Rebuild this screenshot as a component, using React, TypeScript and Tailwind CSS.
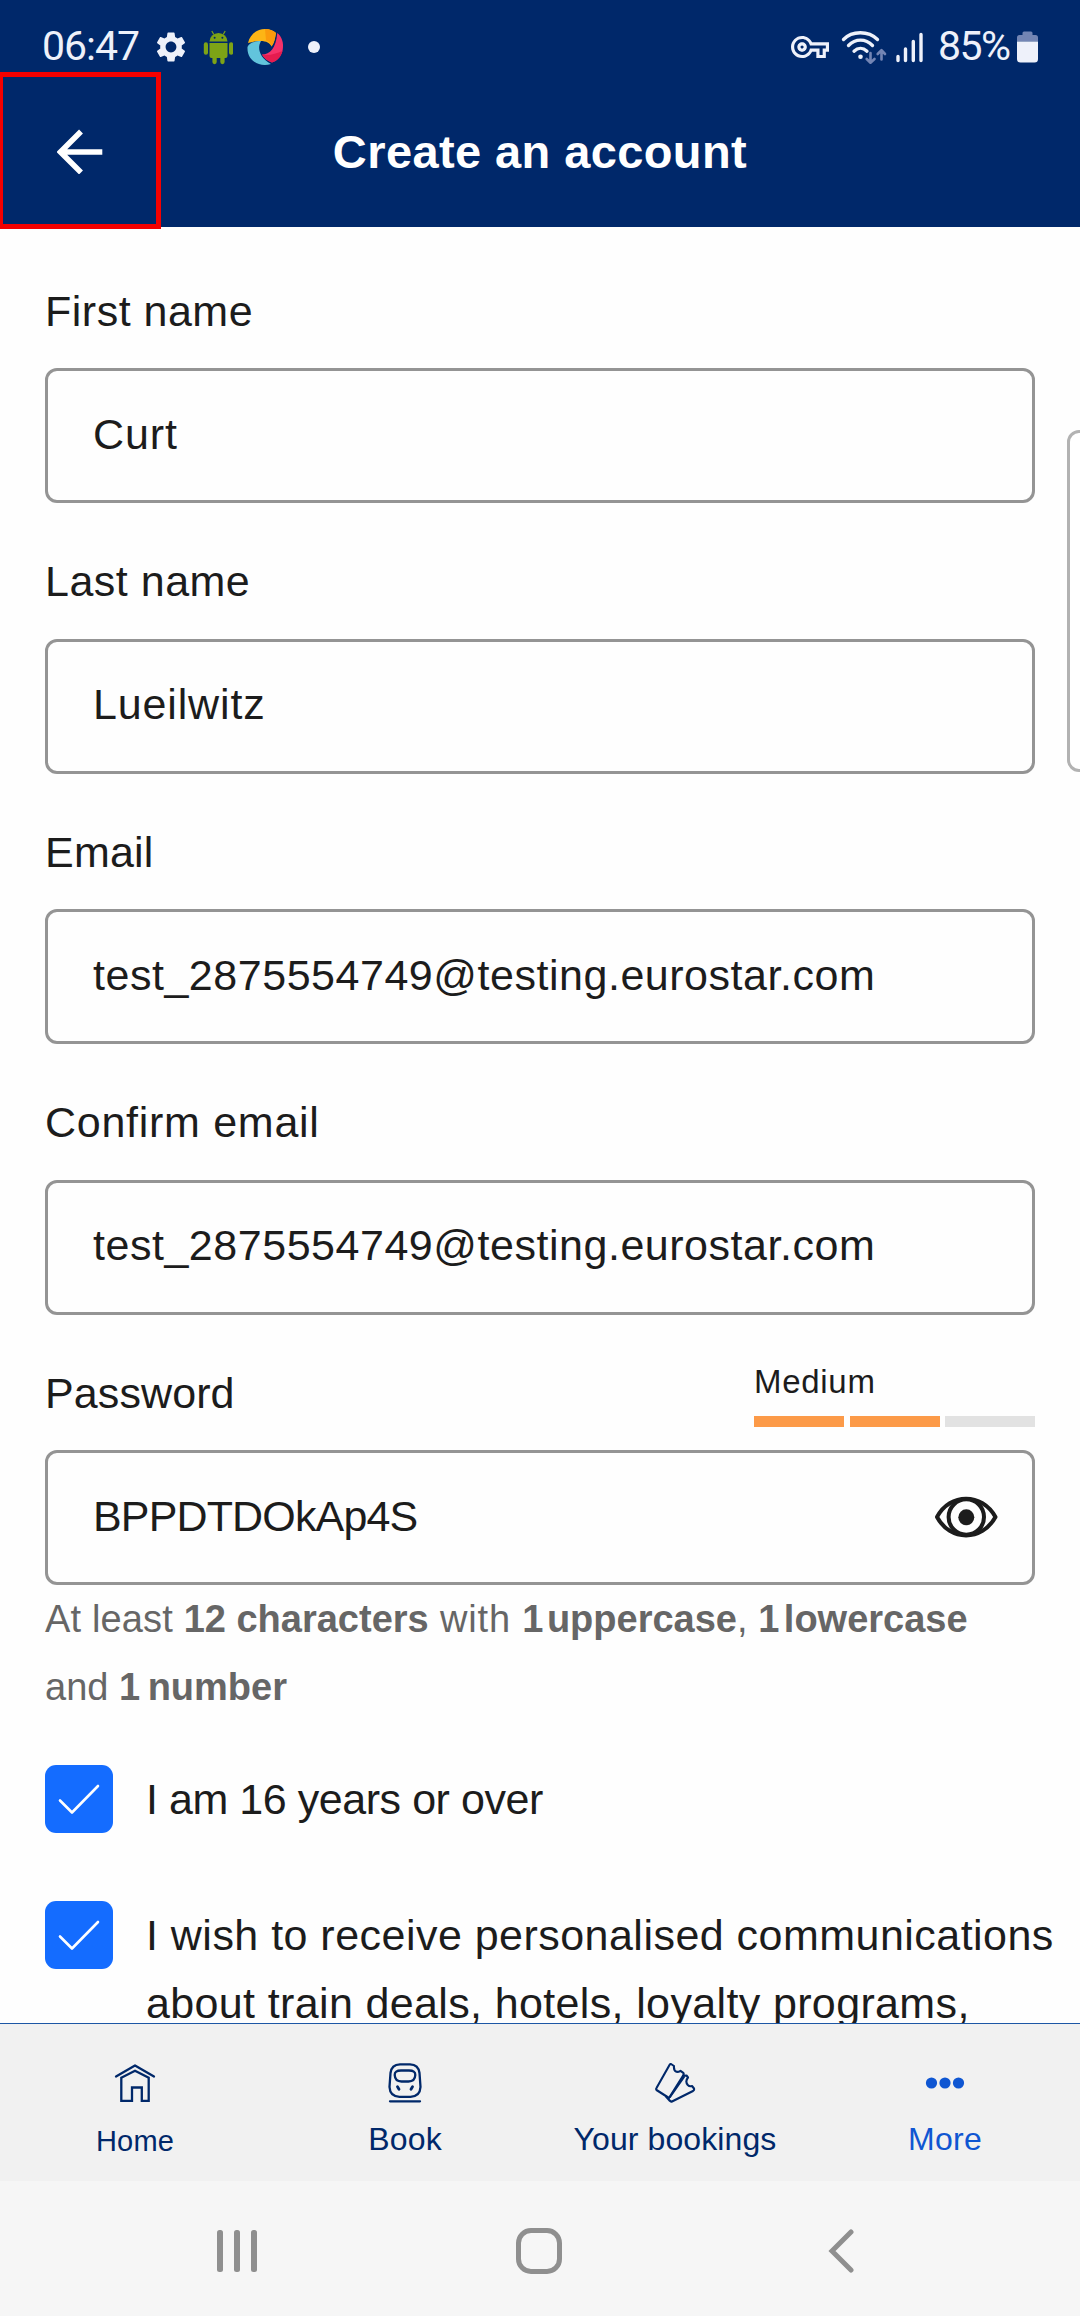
import React from "react";
import { MdSettings, MdOutlineVpnKey } from "react-icons/md";

function AndroidIcon() {
  return (
    <svg className="ml-[14px] h-[36px] w-[30px]" viewBox="203 28 30 36" fill="#7da316">
      <path d="M213.8 33.5 L211.8 30 M223.2 33.5 L225.2 30" stroke="#7da316" strokeWidth="1.2" />
      <path d="M209.5 40.6 A9 8.6 0 0 1 227.5 40.6 Z" />
      <circle cx="214.6" cy="36.8" r="1" fill="#00286a" />
      <circle cx="222.4" cy="36.8" r="1" fill="#00286a" />
      <path d="M209.5 42 H227.5 V55 A2 2 0 0 1 225.5 57 H224.6 V61 A2 2 0 0 1 220.3 61 V57 H216.7 V61 A2 2 0 0 1 212.4 61 V57 H211.5 A2 2 0 0 1 209.5 55 Z" />
      <rect x="203.800" y="41.300" width="4.200" height="12.500" rx="2.100" />
      <rect x="229" y="41.300" width="4.200" height="12.500" rx="2.100" />
    </svg>
  );
}

function SwirlIcon() {
  return (
    <svg className="ml-[14px] h-[38px] w-[38px]" viewBox="247 27 38 38">
      <path d="M248 42 C250 33 257 28 265 28 C270 28 274 30 276 32 C275 37 274.500 42 271.500 45.500 C269 40 262 38 248 42 Z" fill="#fdb515" />
      <path d="M266 39.500 C270 40.500 271 43 271.500 45.500 C274.500 42 275 37 276 32 C273 29.500 269 28 265 28 Z" fill="#fb9a0c" />
      <path d="M277.300 32 C282 36 284 42 282.700 49 C281 56 277 60 272 61.500 C267 60 264 57 262 53.500 C270 53.500 276 47 277.300 32 Z" fill="#f5326a" />
      <path d="M262 53.500 C268 55 276 53 282.500 50 C281 56 277 60 272 61.500 C267 60 264 57 262 53.500 Z" fill="#e51c4f" />
      <path d="M247.500 46 C248 44.500 250 42.500 252 41.500 C256 40 259 40 261 40.200 C257 46 259 57 271 63 C262 66 254 62 250 56.500 C248 53 247.300 50 247.500 46 Z" fill="#62c4dc" />
    </svg>
  );
}

function WifiIcon() {
  return (
    <svg className="ml-[12px] h-[38px] w-[46px]" viewBox="841 27 46 38" fill="none" strokeLinecap="round">
      <g stroke="#eef1fa" strokeWidth="3.300">
        <path d="M843.500 38.500 C852 29.500 868.500 29.500 877.500 38.500" />
        <path d="M848.500 44.500 C855.500 37.300 865.500 37.300 872.500 44.500" />
        <path d="M854 50.200 C858 46.400 863 46.400 867 50.200" />
      </g>
      <circle cx="860.500" cy="55.700" r="2.300" fill="#eef1fa" />
      <g stroke="#7385b4" strokeWidth="2.600" strokeLinejoin="round">
        <path d="M870.500 52 V61.500 M866.700 58 L870.500 61.700 L874.500 58" />
        <path d="M881.500 58.500 V49.500 M877.700 53 L881.500 49.200 L885 53" />
      </g>
    </svg>
  );
}

function SignalIcon() {
  return (
    <svg className="ml-[8px] h-[32px] w-[28px]" viewBox="895 30 28 32" stroke="#eef1fa" strokeWidth="3.400" strokeLinecap="round">
      <path d="M898 55.500 V59.500 M905.500 48 V59.500 M913.300 40.500 V59.500 M921 33.500 V59.500" />
    </svg>
  );
}

function BatteryIcon() {
  return (
    <svg className="ml-[6px] h-[32px] w-[21px]" viewBox="1017 30.500 21 32">
      <path d="M1017 41 V37 Q1017 34.500 1019.500 34.500 H1022.500 V32.500 Q1022.500 31 1024 31 H1031 Q1032.500 31 1032.500 32.500 V34.500 H1035.500 Q1038 34.500 1038 37 V41 Z" fill="#7385b4" />
      <path d="M1017 41 H1038 V58.500 Q1038 62 1034.500 62 H1020.500 Q1017 62 1017 58.500 Z" fill="#eef1fa" />
    </svg>
  );
}

function StatusBar() {
  return (
    <div className="flex h-[93px] items-center pr-[42px] pl-[42px] font-[Roboto,sans-serif] text-[41px] text-[#eef1fa]">
      <span className="w-[111px] whitespace-nowrap tracking-[-1px]">06:47</span>
      <MdSettings className="size-[36px]" />
      <AndroidIcon />
      <SwirlIcon />
      <span className="ml-[23px] size-[12px] rounded-full bg-[#eef1fa]" />
      <div className="ml-auto flex items-center">
        <MdOutlineVpnKey className="size-[38px]" />
        <WifiIcon />
        <SignalIcon />
        <span className="ml-[15px] w-[73px] whitespace-nowrap tracking-[-1.600px]">85%</span>
        <BatteryIcon />
      </div>
    </div>
  );
}

function Header() {
  return (
    <header className="relative h-[227px] shrink-0 bg-[#00286a]">
      <StatusBar />
      <div className="flex h-[117px] items-center justify-center">
        <h1 className="text-[47px] leading-[60px] font-bold tracking-[0.400px] whitespace-nowrap text-white">Create an account</h1>
      </div>
      <button aria-label="Back" className="absolute top-[72px] -left-[2px] z-10 flex h-[157px] w-[163px] items-center justify-center border-[5px] border-[#f40000]">
        <svg className="h-[46px] w-[46px]" viewBox="56.5 128 46 46" fill="none" stroke="#fff" strokeWidth="5.500">
          <path d="M101.800 152 H61 M80.500 131.500 L60 152 L80.500 172.500" />
        </svg>
      </button>
    </header>
  );
}

function Field({
  label,
  value,
  labelClass = "",
  valueClass = "",
  meter,
  action,
}: {
  label: string;
  value: string;
  labelClass?: string;
  valueClass?: string;
  meter?: React.ReactNode;
  action?: React.ReactNode;
}) {
  return (
    <div className="flex h-[270.500px] flex-col">
      <div className="flex h-[135.500px] justify-between pt-[44px] leading-[68px]">
        <label className={labelClass}>{label}</label>
        {meter}
      </div>
      <div className="flex h-[135px] items-center justify-between rounded-[12px] border-[3px] border-[#949494] pr-[34px] pb-[4px] pl-[45px] leading-[68px]">
        <span className={valueClass}>{value}</span>
        {action}
      </div>
    </div>
  );
}

function StrengthMeter() {
  return (
    <div className="w-[281px] pt-[3px]">
      <p className="h-[54px] text-[33px] leading-[40px] tracking-[0.700px]">Medium</p>
      <div className="grid grid-cols-3 gap-[5.500px]">
        <span className="h-[11px] bg-[#fc9a48]" />
        <span className="h-[11px] bg-[#fc9a48]" />
        <span className="h-[11px] bg-[#e2e2e2]" />
      </div>
    </div>
  );
}

function EyeIcon() {
  return (
    <svg className="mt-[3px] h-[42px] w-[64px]" viewBox="934 1496 64 42" fill="none" stroke="#1c1c1c" strokeWidth="4">
      <path d="M937 1517 C950 1492.500 982 1492.500 995.500 1517 C982 1541.500 950 1541.500 937 1517 Z" strokeLinejoin="round" />
      <circle cx="966.300" cy="1517" r="17.700" />
      <circle cx="966.300" cy="1517.300" r="8" fill="#1c1c1c" stroke="none" />
    </svg>
  );
}

function CheckRow({ children }: { children: React.ReactNode }) {
  return (
    <div className="mb-[68px] flex items-start gap-[33px]">
      <span className="flex h-[68px] w-[68px] shrink-0 items-center justify-center rounded-[11px] bg-[#146cff]">
        <svg className="h-[32px] w-[44px]" viewBox="57 1784 44 32" fill="none" stroke="#fff" strokeWidth="2.600" strokeLinecap="round" strokeLinejoin="round">
          <path d="M60 1801.500 L72 1813.500 L98 1787" />
        </svg>
      </span>
      <p className="leading-[68px] whitespace-nowrap">{children}</p>
    </div>
  );
}

function HomeIcon() {
  return (
    <svg className="h-[40px] w-[42px]" viewBox="114 2063 42 40" fill="none" stroke="#00286a" strokeWidth="2.300" strokeLinecap="round" strokeLinejoin="round">
      <path d="M116 2076.500 L135 2065.500 L154 2076.500" />
      <path d="M121.300 2077.800 L135 2070.800 L148.700 2077.800 V2100.800 H141.800 V2087.500 H132 V2100.800 H121.300 Z" strokeLinejoin="miter" />
    </svg>
  );
}

function TrainIcon() {
  return (
    <svg className="h-[40px] w-[34px]" viewBox="388 2063 34 40" fill="none" stroke="#00286a" strokeWidth="2.300" strokeLinecap="round">
      <path d="M400 2064.300 H410 Q418.500 2064.500 419.500 2073 L420.500 2087 Q420 2096.500 410.500 2096.800 H399.500 Q390 2096.500 389.500 2087 L390.500 2073 Q391.500 2064.500 400 2064.300 Z" />
      <path d="M401 2070.500 H409 Q415.500 2070.500 415.300 2075 Q415 2081.500 408.500 2081.500 H401.500 Q395 2081.500 394.700 2075 Q394.500 2070.500 401 2070.500 Z" />
      <path d="M397.500 2086.800 L399 2089.300 M412.500 2086.800 L411 2089.300" strokeWidth="2.800" />
      <path d="M390 2101.300 H420" />
    </svg>
  );
}

function TicketIcon() {
  return (
    <svg className="h-[40px] w-[42px]" viewBox="654 2063 42 40" fill="none" stroke="#00286a" strokeWidth="2.100" strokeLinecap="round" strokeLinejoin="round">
      <path d="M671 2064 L674 2066 Q673.500 2070.500 676.500 2071.800 Q678.500 2072 680.500 2070.800 L683.300 2072.800 Q684.200 2074 683 2075.800 L669 2098 L656.500 2090 Q655.800 2089 656.500 2088 L669.500 2065 Q670.200 2063.800 671 2064 Z" />
      <path d="M683 2075.800 L686.500 2075.500 L688 2077.500 Q684.800 2081.500 687.800 2085 Q689.500 2086.800 692 2086 L694 2088.500 Q694.500 2090 693 2091 L671.500 2101.800 L669.500 2100.500 L666 2096.500" />
      <path d="M670 2097 L684 2077" />
    </svg>
  );
}

function DotsIcon() {
  return (
    <svg className="h-[40px] w-[42px]" viewBox="924 2063 42 40" fill="#0f56d2">
      <circle cx="931.500" cy="2083" r="5.600" />
      <circle cx="945" cy="2083" r="5.600" />
      <circle cx="958.500" cy="2083" r="5.600" />
    </svg>
  );
}

function Tab({ icon, children, className }: { icon: React.ReactNode; children: React.ReactNode; className: string }) {
  return (
    <div className="flex flex-col items-center pt-[39px]">
      {icon}
      <span className={className}>{children}</span>
    </div>
  );
}

function TabBar() {
  return (
    <nav className="grid h-[158px] shrink-0 grid-cols-4 border-t border-[#1d57a5] bg-[#f1f1f1] whitespace-nowrap text-[#00286a]">
      <Tab icon={<HomeIcon />} className="mt-[19px] text-[29px] leading-[38px] tracking-[0.200px]">Home</Tab>
      <Tab icon={<TrainIcon />} className="mt-[17px] text-[32px] leading-[38px] tracking-[0.200px]">Book</Tab>
      <Tab icon={<TicketIcon />} className="mt-[17px] text-[32px] leading-[38px] tracking-[0.100px]">Your bookings</Tab>
      <Tab icon={<DotsIcon />} className="mt-[17px] text-[32px] leading-[38px] tracking-[0.300px] text-[#0f56d2]">More</Tab>
    </nav>
  );
}

function SystemNav() {
  return (
    <div className="flex h-[135px] shrink-0 items-center justify-between bg-[#f6f6f6] pt-[5px] pr-[226px] pl-[217px] text-[#8f8f8f]">
      <svg className="h-[42px] w-[40px]" viewBox="217 2230 40 42" fill="currentColor">
        <rect x="217" y="2230" width="6" height="42" rx="2.500" />
        <rect x="234" y="2230" width="6" height="42" rx="2.500" />
        <rect x="251" y="2230" width="6" height="42" rx="2.500" />
      </svg>
      <span className="mr-[8px] h-[46px] w-[46px] rounded-[15px] border-[5px] border-[#8f8f8f]" />
      <svg className="h-[44px] w-[26px]" viewBox="828 2229 26 44" fill="none" stroke="currentColor" strokeWidth="5" strokeLinecap="round">
        <path d="M851 2232 L832 2251 L851 2270" />
      </svg>
    </div>
  );
}

export default function App() {
  return (
    <div className="relative flex h-[2316px] w-[1080px] flex-col overflow-hidden bg-[#fefefe] font-['Liberation_Sans',sans-serif] text-[43px] tracking-[0.500px] text-[#1c1c1c]">
      <Header />
      <main className="min-h-0 grow overflow-hidden px-[45px] pt-[5.500px]">
        <Field label="First name" value="Curt" valueClass="tracking-[0.900px]" />
        <Field label="Last name" value="Lueilwitz" valueClass="tracking-[0.850px]" />
        <Field label="Email" value="test_2875554749@testing.eurostar.com" labelClass="tracking-[0.200px]" valueClass="tracking-[0.530px]" />
        <Field label="Confirm email" value="test_2875554749@testing.eurostar.com" labelClass="tracking-[0.720px]" valueClass="tracking-[0.530px]" />
        <Field
          label="Password"
          value="BPPDTDOkAp4S"
          labelClass="tracking-[0.100px]"
          valueClass="tracking-[-0.850px]"
          meter={<StrengthMeter />}
          action={<EyeIcon />}
        />
        <p className="mb-[44px] text-[38px] leading-[68px] tracking-[0px] whitespace-nowrap text-[#666]">
          <span className="tracking-[0.150px]">At least </span>
          <b>12 characters</b>
          <span className="tracking-[0.800px]"> with </span>
          <b className="[word-spacing:-7px]">1 uppercase</b>, <b className="[word-spacing:-6px]">1 lowercase</b>
          <br />
          and <b className="[word-spacing:-3px]">1 number</b>
        </p>
        <CheckRow>
          <span className="tracking-[-0.450px]">I am 16 years or over</span>
        </CheckRow>
        <CheckRow>
          <span className="tracking-[0.470px]">I wish to receive personalised communications</span>
          <br />
          <span className="tracking-[0.360px]">about train deals, hotels, loyalty programs,</span>
        </CheckRow>
      </main>
      <TabBar />
      <SystemNav />
      <div className="absolute top-[430px] left-[1067px] h-[342px] w-[40px] rounded-[12px] border-[3px] border-[#b2b2b2] bg-white" />
    </div>
  );
}
